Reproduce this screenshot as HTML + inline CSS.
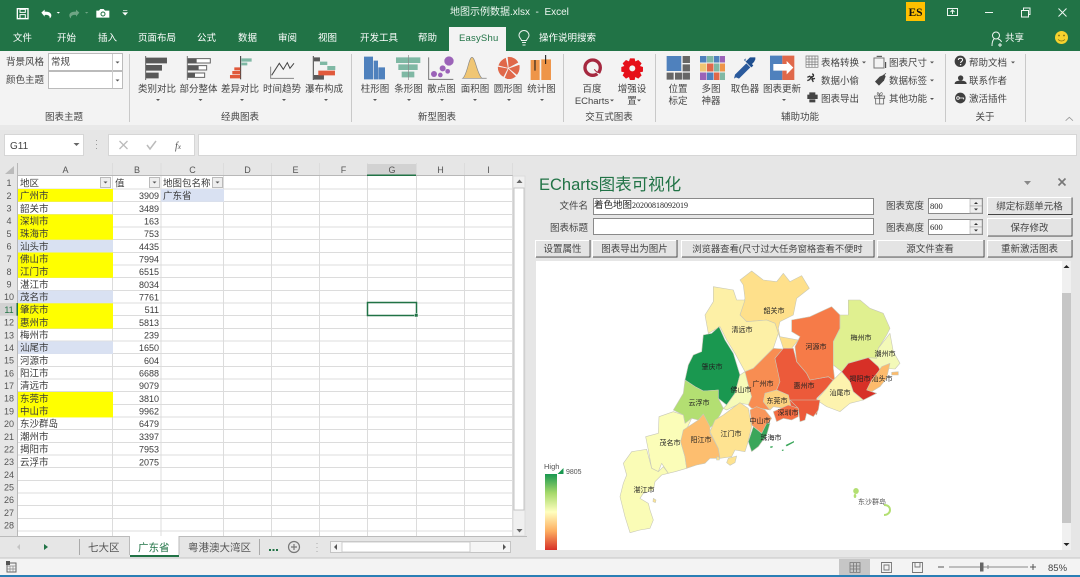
<!DOCTYPE html>
<html><head><meta charset="utf-8"><style>
html,body{margin:0;padding:0;background:#e6e6e6;overflow:hidden}
svg{display:block;filter:blur(.35px)}
text{font-family:"Liberation Sans","Noto Sans CJK SC",sans-serif;font-size:9.5px;fill:#444}
.c{text-anchor:middle}.r{text-anchor:end}
.w text,.w{fill:#f2f8f4}
.cell text{fill:#3a3a3a}
.h text{fill:#555;text-anchor:middle;font-size:9px}
.n text{font-size:9px;text-anchor:end;fill:#3a3a3a}
.m text{font-size:7px;text-anchor:middle;fill:#222}
.b{fill:#e4e4e4;stroke:none}
</style></head><body>
<svg width="1080" height="577" viewBox="0 0 1080 577" xmlns="http://www.w3.org/2000/svg">
<rect width="1080" height="577" fill="#e6e6e6"/>
<!-- title bar -->
<rect width="1080" height="51" fill="#217346"/>
<g transform="scale(.3333)" fill="none" stroke="#fff">
<path d="M52 26h32v30h-32z" stroke-width="4"/><path d="M60 28h16v9h-16zM60 44h16v11h-16z" stroke-width="3"/>
<path d="M124 38l10-9v6c12-1 20 4 20 11 0 4-2 7-5 9 1-8-5-11-15-10v5z" fill="#fff" stroke="none"/>
<path d="M170 36h10l-5 5z" fill="#fff" stroke="none"/>
<path d="M238 38l-10-9v6c-12-1-20 4-20 11 0 4 2 7 5 9-1-8 5-11 15-10v5z" fill="#6fa585" stroke="none"/>
<path d="M255 36h10l-5 5z" fill="#6fa585" stroke="none"/>
<path d="M289 32h8l4-5h10l4 5h13v21h-39z" fill="#fff" stroke="none"/><circle cx="309" cy="42" r="6" stroke="#217346" stroke-width="3"/>
<path d="M369 31h13M369 38h13l-6.500 7z" fill="#fff" stroke-width="2"/>
</g>
<g class="w"><text x="450" y="15" style="fill:#eef6f1;font-size:10px">地图示例数据.xlsx &#160;-&#160; Excel</text>
<text x="13" y="41" style="fill:#fff">文件</text><text x="57" y="41" style="fill:#fff">开始</text><text x="98" y="41" style="fill:#fff">插入</text><text x="138" y="41" style="fill:#fff">页面布局</text><text x="197" y="41" style="fill:#fff">公式</text><text x="238" y="41" style="fill:#fff">数据</text><text x="278" y="41" style="fill:#fff">审阅</text><text x="318" y="41" style="fill:#fff">视图</text><text x="360" y="41" style="fill:#fff">开发工具</text><text x="418" y="41" style="fill:#fff">帮助</text><text x="539" y="41" style="fill:#fff">操作说明搜索</text><text x="1005" y="41" style="fill:#fff">共享</text></g>
<rect x="449" y="27" width="57" height="25" fill="#f3f3f3"/>
<text x="459" y="41" style="fill:#217346;font-size:9.500px;letter-spacing:.2px">EasyShu</text>
<path d="M522 42.500h4M522.500 45h3M521.500 40.500c-.3-2-2.500-2.500-2.500-5a5 5 0 0 1 10 0c0 2.500-2.200 3-2.500 5z" fill="none" stroke="#eaf3ee" stroke-width="1"/>
<!-- ES logo -->
<rect x="906" y="2" width="19" height="19" fill="#ffc000"/>
<text x="915.500" y="16" class="c" style="font-family:'Liberation Serif',serif;font-weight:bold;font-size:11.500px;fill:#111">ES</text>
<!-- window controls -->
<g fill="none" stroke="#eef6f1" stroke-width="1">
<rect x="947.500" y="8.500" width="10" height="7"/><path d="M952.500 14v-4M950.500 12l2-2 2 2"/>
<path d="M985 12.500h8"/>
<rect x="1021.500" y="10.500" width="7" height="6.500"/><path d="M1023.500 10v-2h6.500v6.500h-1.500"/>
<path d="M1058.500 8.500l8 8M1066.500 8.500l-8 8"/>
<circle cx="996" cy="35.500" r="3.500"/><path d="M992 46c0-4 1-6 2-7M998 39c2 .5 3 1.500 3.500 3M1000 43v4M998 45h4"/>
</g>
<circle cx="1061.500" cy="37.500" r="6.500" fill="#f6d22e"/><circle cx="1059" cy="35.500" r=".9" fill="#7b6a10"/><circle cx="1064" cy="35.500" r=".9" fill="#7b6a10"/><path d="M1058 39.500q3.500 3 7 0" stroke="#7b6a10" fill="none" stroke-width=".8"/>
<!-- ribbon -->
<rect y="51" width="1080" height="74" fill="#f3f3f3"/>
<rect y="125" width="1080" height="5" fill="#e9e9e9"/>
<g fill="#c9c9c9"><rect x="129" y="54" width="1" height="68"/><rect x="351" y="54" width="1" height="68"/><rect x="563" y="54" width="1" height="68"/><rect x="655" y="54" width="1" height="68"/><rect x="945" y="54" width="1" height="68"/><rect x="1025" y="54" width="1" height="68"/></g>
<text x="6" y="65">背景风格</text><text x="6" y="83">颜色主题</text>
<rect x="48.500" y="53.500" width="74" height="17" fill="#fff" stroke="#bbb"/><rect x="48.500" y="71.500" width="74" height="17" fill="#fff" stroke="#bbb"/><path d="M112.500 54v34" stroke="#ccc"/>
<path d="M115.500 61.500h4l-2 2zM115.500 79.500h4l-2 2z" fill="#555"/>
<text x="51" y="65">常规</text>
<!-- classic icons -->
<g transform="scale(.3333)">
<path d="M437 168v72" stroke="#666" stroke-width="3"/><path d="M438 173h63v17h-63zM438 195h48v17h-48zM438 218h38v17h-38z" fill="#595959"/>
<path d="M562 168v72" stroke="#777" stroke-width="3"/>
<g fill="#fff" stroke="#666" stroke-width="3"><path d="M564 176h67v13h-67zM564 197h56v13h-56zM564 219h50v13h-50z"/></g><path d="M564 176h26v13h-26zM564 197h32v13h-32zM564 219h21v13h-21z" fill="#595959"/>
<path d="M722 168v70" stroke="#333" stroke-width="3"/><path d="M724 175h31v10h-31zM724 188h18v8h-18z" fill="#7fb8a4"/><path d="M703 202h18v9h-18zM697 213h24v10h-24zM690 225h31v10h-31z" fill="#e0593b"/>
<path d="M812 200v35h70" stroke="#888" stroke-width="3" fill="none"/><path d="M815 226l23-36 12 18 12-20 8 17 12-15" stroke="#444" stroke-width="3" fill="none"/>
<path d="M940 168v72" stroke="#444" stroke-width="3"/><path d="M942 172h18v12h-18zM942 225h30v14h-30z" fill="#595959"/><path d="M960 185h22v10h-22zM982 198h24v12h-24z" fill="#7fb8a4"/><path d="M955 212h50v14h-50z" fill="#e0593b"/>
</g>
<g class="c"><text x="157" y="92" class="c">类别对比</text><text x="198.500" y="92" class="c">部分整体</text><text x="240" y="92" class="c">差异对比</text><text x="282" y="92" class="c">时间趋势</text><text x="324" y="92" class="c">瀑布构成</text></g>
<path d="M156 99h4l-2 2zM198.500 99h4l-2 2zM240 99h4l-2 2zM282 99h4l-2 2zM324 99h4l-2 2zM373 99h4l-2 2zM407 99h4l-2 2zM440 99h4l-2 2zM473 99h4l-2 2zM507 99h4l-2 2zM540 99h4l-2 2zM782 99h4l-2 2z" fill="#555"/>
<text x="64" y="120" class="c">图表主题</text><text x="240" y="120" class="c">经典图表</text><text x="437" y="120" class="c">新型图表</text><text x="609" y="120" class="c">交互式图表</text><text x="800" y="120" class="c">辅助功能</text><text x="985" y="120" class="c">关于</text>
<!-- new chart icons -->
<g transform="translate(360,0) scale(.3333)">
<path d="M12 170h27v68h-27zM41 182h13v56h-13zM55 202h20v36h-20z" fill="#4f81bd"/>
<path d="M108 172h73v17h-73zM115 193h58v17h-58zM125 215h38v17h-38z" fill="#7fb8a4"/><path d="M146 165v75" stroke="#888" stroke-width="2"/>
<path d="M206 172v66h74" fill="none" stroke="#777" stroke-width="3"/>
<g fill="#9b63b8"><circle cx="267" cy="183" r="14"/><circle cx="248" cy="205" r="9"/><circle cx="222" cy="222" r="9"/><circle cx="263" cy="214" r="7"/><circle cx="241" cy="225" r="7"/></g>
<path d="M308 235c14-10 18-63 28-63s15 50 30 63z" fill="#f0c674" stroke="#888" stroke-width="2"/><path d="M366 235h14" stroke="#999" stroke-width="3"/>
<path d="M445 205l-3-35c18-2 30 8 34 18zM445 205l34-12c2 10 1 22-8 33zM445 205l24 24c-10 10-24 12-36 5zM445 205l-14 27c-14-6-20-22-18-33zM445 205l-31-8c3-10 12-20 24-25z" fill="#e0684a" stroke="#f3f3f3" stroke-width="2"/>
<path d="M512 180h27v60h-27zM544 178h29v62h-29z" fill="#ee9549"/><path d="M525 180v32M557 165v27" stroke="#111" stroke-width="3"/>
<circle cx="698" cy="203" r="23" fill="none" stroke="#a5283f" stroke-width="10"/><path d="M708 214l12 12" stroke="#f3f3f3" stroke-width="5"/><path d="M703 208q8 12 19 10" stroke="#a5283f" stroke-width="3" fill="none"/>
<path d="M810 175h14l2 9 9-4 10 10-5 8 9 3v14l-9 2 5 9-10 10-9-5-2 9h-14l-3-9-9 5-10-10 5-9-9-2v-14l9-3-5-8 10-10 9 4z" fill="#e60f19"/><circle cx="817" cy="205" r="9" fill="#f3f3f3"/>
<path d="M920 168h44v45h-44z" fill="#4f81bd"/><path d="M968 168h22v21h-22zM968 193h22v21h-22zM920 218h21v21h-21zM945 218h21v21h-21zM968 218h22v21h-22z" fill="#666"/>
</g>
<text x="592" y="92" class="c">百度</text><text x="592" y="104" class="c">ECharts</text><text x="632" y="92" class="c">增强设</text><text x="632" y="104" class="c">置</text>
<path d="M610 99.500h4l-2 2zM637 99.500h4l-2 2z" fill="#555"/>
<text x="375" y="92" class="c">柱形图</text><text x="408.500" y="92" class="c">条形图</text><text x="441.500" y="92" class="c">散点图</text><text x="475" y="92" class="c">面积图</text><text x="508" y="92" class="c">圆形图</text><text x="541.500" y="92" class="c">统计图</text>
<text x="678" y="92" class="c">位置</text><text x="678" y="104" class="c">标定</text><text x="711" y="92" class="c">多图</text><text x="711" y="104" class="c">神器</text><text x="745" y="92" class="c">取色器</text><text x="782" y="92" class="c">图表更新</text>
<!-- multi grid -->
<g>
<rect x="700" y="56" width="6.500" height="6.500" fill="#4f81bd"/><rect x="707" y="56" width="6.500" height="6.500" fill="#7fb8a4"/><rect x="714" y="56" width="5.500" height="6.500" fill="#4f81bd"/><rect x="720" y="56" width="5" height="6.500" fill="#9b63b8"/>
<rect x="700" y="63.500" width="6.500" height="8" fill="#f0c674"/><rect x="707" y="63.500" width="6.500" height="8" fill="#e0684a"/><rect x="714" y="63.500" width="5.500" height="8" fill="#7fb8a4"/><rect x="720" y="63.500" width="5" height="8" fill="#ee9549"/>
<rect x="700" y="72.500" width="6.500" height="7.500" fill="#9b63b8"/><rect x="707" y="72.500" width="6.500" height="7.500" fill="#4f81bd"/><rect x="714" y="72.500" width="5.500" height="7.500" fill="#e0684a"/><rect x="720" y="72.500" width="5" height="7.500" fill="#7fb8a4"/>
</g>
<!-- right ribbon icons -->
<g transform="translate(720,0) scale(.3333)">
<path d="M48 232l-6 4 3-12 34-34 12 12-34 34z" fill="#2a5a9c"/><path d="M76 186l14-14 6 0 10-0 0 6-4 8-6 6 4 5-6 5-22-22 5-5z" fill="#1f4f8f"/>
<path d="M150 167h37v73h-37z" fill="#4f81bd"/><path d="M187 167h36v73h-36z" fill="#e0684a"/>
<path d="M160 192h40v-9l20 20-20 20v-11h-40z" fill="#fff"/>
<path d="M258 168h36v34h-36zM267 168v34M276 168v34M285 168v34M258 177h36M258 186h36M258 194h36" fill="none" stroke="#777" stroke-width="2"/>
<path d="M276 222c6 0 6 8 0 8l-3 1 6 6 6-2M273 231l-4 8-7 3M275 236l5 10M262 232l9-4" stroke="#333" stroke-width="4" fill="none"/>
<path d="M262 284h6v-7h18v7h7v13h-31z M268 298h18v9h-18z" fill="#444"/>
<path d="M462 174h30v30h-30z" fill="none" stroke="#777" stroke-width="3"/><path d="M470 169h16" stroke="#444" stroke-width="3"/><path d="M497 186v18" stroke="#333" stroke-width="3"/>
<path d="M465 245l14-15 14-6 4 5-5 13-15 15z" fill="#444"/><path d="M490 226l8-6" stroke="#444" stroke-width="2"/>
<path d="M464 288h30v7h-30zM467 295h24v17h-24zM479 280v32" fill="none" stroke="#666" stroke-width="2.500"/><path d="M478 287c-8-4-8-10-3-9l4 7c1-8 8-9 8-4s-5 6-8 6" fill="none" stroke="#666" stroke-width="2"/>
<circle cx="721" cy="184" r="17" fill="#3f3f3f"/><path d="M715 180c0-7 13-7 13 0 0 4-6 4-6 9" stroke="#fff" stroke-width="3" fill="none"/><circle cx="722" cy="194" r="2" fill="#fff"/>
<circle cx="722" cy="234" r="8" fill="#3f3f3f"/><path d="M704 252c0-8 8-10 18-10s18 2 18 10z" fill="#3f3f3f"/>
<circle cx="721" cy="294" r="16" fill="#3f3f3f"/><circle cx="714" cy="294" r="4" fill="none" stroke="#fff" stroke-width="2.500"/><path d="M718 294h13v4" stroke="#fff" stroke-width="2.500" fill="none"/>
<path d="M1037 362l11-10 11 10" fill="none" stroke="#999" stroke-width="2.500"/>
</g>
<text x="821" y="66">表格转换</text><text x="821" y="84">数据小偷</text><text x="821" y="102">图表导出</text>
<text x="889" y="66">图表尺寸</text><text x="889" y="84">数据标签</text><text x="889" y="102">其他功能</text>
<text x="969" y="66">帮助文档</text><text x="969" y="84">联系作者</text><text x="969" y="102">激活插件</text>
<path d="M862 61.500h4l-2 2zM930 61.500h4l-2 2zM930 79.500h4l-2 2zM930 98h4l-2 2zM1011 61.500h4l-2 2z" fill="#555"/>
<!-- formula bar -->
<rect y="130" width="1080" height="33" fill="#e6e6e6"/>
<rect x="4.500" y="134.500" width="79" height="21" fill="#fff" stroke="#d6d6d6"/>
<text x="10" y="149" style="font-size:10px;fill:#444">G11</text><path d="M73.500 143h6l-3 3z" fill="#666"/>
<path d="M96.500 140v1M96.500 144v1M96.500 148v1" stroke="#999"/>
<rect x="108.500" y="134.500" width="86" height="21" fill="#fff" stroke="#d6d6d6"/>
<path d="M119.500 141l8 8M127.500 141l-8 8" stroke="#bbb" stroke-width="1.300"/><path d="M147 145l3 4 6-8" stroke="#bbb" fill="none" stroke-width="1.500"/>
<text x="175" y="149" style="font-family:'Liberation Serif',serif;font-style:italic;font-size:10px;fill:#555">f<tspan style="font-size:7.500px">x</tspan></text>
<rect x="198.500" y="134.500" width="878" height="21" fill="#fff" stroke="#d6d6d6"/>
<!-- grid -->
<rect x="0" y="163" width="526" height="373" fill="#e6e6e6"/>
<rect x="18" y="176" width="495" height="360" fill="#fff"/>
<g stroke="#dcdcdc" stroke-width="1" fill="none">
<path d="M18 189h495M18 201.500h495M18 214.500h495M18 227h495M18 239.500h495M18 252.500h495M18 265h495M18 277.500h495M18 290.500h495M18 303h495M18 315.500h495M18 328.500h495M18 341h495M18 353.500h495M18 366.500h495M18 379h495M18 391.500h495M18 404.500h495M18 417h495M18 429.500h495M18 442.500h495M18 455h495M18 467.500h495M18 480.500h495M18 493h495M18 505.500h495M18 518.500h495M18 531h495"/>
<path d="M112.500 163v373M161 163v373M223.500 163v373M271.500 163v373M319.500 163v373M367.500 163v373M416.500 163v373M464.500 163v373M512.500 163v373"/>
</g>
<!-- fills -->
<g fill="#ffff00"><rect x="18" y="189" width="95" height="12.700"/><rect x="18" y="214.400" width="95" height="25.400"/><rect x="18" y="252.500" width="95" height="25.300"/><rect x="18" y="303.200" width="95" height="25.400"/><rect x="18" y="392" width="95" height="25.400"/></g>
<g fill="#d9e1f2"><rect x="18" y="239.800" width="95" height="12.700"/><rect x="18" y="290.500" width="95" height="12.700"/><rect x="18" y="341.300" width="95" height="12.600"/><rect x="161" y="189" width="63" height="12.700"/></g>
<path d="M18 175.500h495M17.500 163v373" stroke="#b8b8b8" fill="none"/>
<rect x="367" y="164" width="49" height="11" fill="#d2d2d2"/><rect x="367" y="174.500" width="49" height="1.500" fill="#217346"/>
<rect x="0" y="303" width="17" height="12.700" fill="#d2d2d2"/><rect x="16.500" y="303" width="1.500" height="12.700" fill="#217346"/>
<path d="M5 174l9-8v8z" fill="#bbb"/>
<g class="h"><text x="65.500" y="173">A</text><text x="137" y="173">B</text><text x="192.500" y="173">C</text><text x="247.500" y="173">D</text><text x="295.500" y="173">E</text><text x="343.500" y="173">F</text><text x="392" y="173">G</text><text x="440.500" y="173">H</text><text x="488.500" y="173">I</text></g>
<g class="h" style="font-size:9px"><text x="9" y="186">1</text><text x="9" y="199">2</text><text x="9" y="211.500">3</text><text x="9" y="224">4</text><text x="9" y="237">5</text><text x="9" y="249.500">6</text><text x="9" y="262">7</text><text x="9" y="275">8</text><text x="9" y="287.500">9</text><text x="9" y="300">10</text><text x="9" y="313" style="fill:#217346">11</text><text x="9" y="325.500">12</text><text x="9" y="338.500">13</text><text x="9" y="351">14</text><text x="9" y="363.500">15</text><text x="9" y="376.500">16</text><text x="9" y="389">17</text><text x="9" y="401.500">18</text><text x="9" y="414.500">19</text><text x="9" y="427">20</text><text x="9" y="440">21</text><text x="9" y="452.500">22</text><text x="9" y="465">23</text><text x="9" y="478">24</text><text x="9" y="490.500">25</text><text x="9" y="503">26</text><text x="9" y="516">27</text><text x="9" y="528.500">28</text></g>
<g class="cell">
<text x="20" y="186.500">地区</text><text x="115" y="186.500">值</text><text x="163" y="186.500">地图包名称</text>
<text x="20" y="199">广州市</text><text x="20" y="212">韶关市</text><text x="20" y="224.500">深圳市</text><text x="20" y="237">珠海市</text><text x="20" y="250">汕头市</text><text x="20" y="262.500">佛山市</text><text x="20" y="275">江门市</text><text x="20" y="288">湛江市</text><text x="20" y="300.500">茂名市</text><text x="20" y="313">肇庆市</text><text x="20" y="326">惠州市</text><text x="20" y="338.500">梅州市</text><text x="20" y="351">汕尾市</text><text x="20" y="364">河源市</text><text x="20" y="376.500">阳江市</text><text x="20" y="389">清远市</text><text x="20" y="402">东莞市</text><text x="20" y="414.500">中山市</text><text x="20" y="427">东沙群岛</text><text x="20" y="440">潮州市</text><text x="20" y="452.500">揭阳市</text><text x="20" y="465.500">云浮市</text>
<text x="163" y="199">广东省</text>
</g>
<g class="n"><text x="159" y="199">3909</text><text x="159" y="212">3489</text><text x="159" y="224.500">163</text><text x="159" y="237">753</text><text x="159" y="250">4435</text><text x="159" y="262.500">7994</text><text x="159" y="275">6515</text><text x="159" y="288">8034</text><text x="159" y="300.500">7761</text><text x="159" y="313">511</text><text x="159" y="326">5813</text><text x="159" y="338.500">239</text><text x="159" y="351">1650</text><text x="159" y="364">604</text><text x="159" y="376.500">6688</text><text x="159" y="389">9079</text><text x="159" y="402">3810</text><text x="159" y="414.500">9962</text><text x="159" y="427">6479</text><text x="159" y="440">3397</text><text x="159" y="452.500">7953</text><text x="159" y="465.500">2075</text></g>
<g fill="#eee" stroke="#bbb"><rect x="100.500" y="177.500" width="10" height="10"/><rect x="149.500" y="177.500" width="10" height="10"/><rect x="212.500" y="177.500" width="10" height="10"/></g>
<path d="M103.500 181.500h4l-2 2zM152.500 181.500h4l-2 2zM215.500 181.500h4l-2 2z" fill="#555"/>
<rect x="367.500" y="302.500" width="49" height="13" fill="none" stroke="#217346" stroke-width="1.500"/><rect x="414.500" y="313.500" width="3.500" height="3.500" fill="#217346" stroke="#fff" stroke-width=".5"/>
<!-- v scroll -->
<rect x="513" y="176" width="12" height="360" fill="#f0f0f0" stroke="#dcdcdc"/>
<rect x="514" y="188" width="10" height="322" fill="#fff" stroke="#c4c4c4"/>
<path d="M516.500 183l3-3.500 3 3.500zM516.500 529l3 3.500 3-3.500z" fill="#666"/>
<!-- tabs -->
<rect y="536" width="527" height="22" fill="#e6e6e6"/>
<path d="M0 536.500h130M178 536.500h349" stroke="#bbb"/>
<path d="M20 544l-3 3 3 3z" fill="#c4c4c4"/><path d="M44 544l4 3-4 3z" fill="#217346"/>
<path d="M79.500 539v16M259.500 539v16" stroke="#aaa"/>
<rect x="130" y="536" width="49" height="20" fill="#fff"/><rect x="130" y="555" width="49" height="2" fill="#217346"/><path d="M129.500 536v19M179 536v19" stroke="#bbb"/>
<text x="88" y="551" style="font-size:10.500px;fill:#555">七大区</text><text x="138" y="551" style="font-size:10.500px;fill:#217346">广东省</text><text x="188" y="551" style="font-size:10.500px;fill:#555">粤港澳大湾区</text>
<path d="M269 549h2v2h-2zM272.500 549h2v2h-2zM276 549h2v2h-2z" fill="#217346"/>
<circle cx="294" cy="547" r="5.500" fill="none" stroke="#777" stroke-width="1.200"/><path d="M291 547h6M294 544v6" stroke="#777" stroke-width="1.200"/>
<path d="M317 543v1M317 547v1M317 551v1" stroke="#aaa"/>
<rect x="330.500" y="541.500" width="180" height="11" fill="#f5f5f5" stroke="#c4c4c4"/><rect x="342" y="542" width="128" height="10" fill="#fff" stroke="#ccc"/><path d="M337 544l-3 3 3 3zM503 544l3 3-3 3z" fill="#555"/>
<!-- task panel -->
<rect x="527" y="163" width="553" height="395" fill="#e6e6e6"/>
<text x="539" y="190" style="font-size:16.500px;fill:#217346">ECharts图表可视化</text>
<path d="M1024 181h7l-3.500 4z" fill="#888"/><path d="M1058.500 178.500l7 7M1065.500 178.500l-7 7" stroke="#777" stroke-width="1.600"/>
<g font-size="9"><text x="588" y="209" class="r">文件名</text><text x="588" y="231" class="r">图表标题</text><text x="924" y="209" class="r">图表宽度</text><text x="924" y="231" class="r">图表高度</text></g>
<g fill="#fff" stroke="#8a8a8a"><rect x="593.500" y="198.500" width="280" height="16"/><rect x="593.500" y="218.500" width="280" height="16"/><rect x="928.500" y="198.500" width="54" height="15"/><rect x="928.500" y="219.500" width="54" height="15"/></g>
<text x="594" y="208" style="font-size:9.500px;fill:#222">着色地图<tspan style="font-family:'Liberation Serif',serif;font-size:8px">20200818092019</tspan></text>
<text x="930" y="209" style="font-family:'Liberation Serif',serif;font-size:8.500px;fill:#222">800</text><text x="930" y="230" style="font-family:'Liberation Serif',serif;font-size:8.500px;fill:#222">600</text>
<g fill="#eee" stroke="#aaa" stroke-width=".6"><rect x="970" y="199" width="12" height="7"/><rect x="970" y="206" width="12" height="7"/><rect x="970" y="220" width="12" height="7"/><rect x="970" y="227" width="12" height="7"/></g>
<path d="M974 204l2-2 2 2zM974 208.500l2 2 2-2zM974 225l2-2 2 2zM974 229.500l2 2 2-2z" fill="#333"/>
<g fill="#e4e4e4" stroke="#fff">
<rect x="987.500" y="197.500" width="84" height="17"/><rect x="987.500" y="218.500" width="84" height="17"/><rect x="987.500" y="240.500" width="84" height="16"/>
<rect x="535.500" y="240.500" width="54" height="16"/><rect x="592.500" y="240.500" width="84" height="16"/><rect x="681.500" y="240.500" width="192" height="16"/><rect x="877.500" y="240.500" width="106" height="16"/>
</g>
<g stroke="#444" fill="none"><path d="M988 214.500h84v-17M988 236h84v-18M988 257h84v-17M536 257h54v-17M593 257h84v-17M682 257h192v-17M878 257h106v-17"/></g>
<text x="1029.500" y="209.500" class="c">绑定标题单元格</text><text x="1029.500" y="231" class="c">保存修改</text><text x="1029.500" y="252" class="c">重新激活图表</text>
<text x="562.500" y="252" class="c">设置属性</text><text x="634.500" y="252" class="c">图表导出为图片</text><text x="777.500" y="252" class="c" style="font-size:9.300px">浏览器查看(尺寸过大任务窗格查看不便时</text><text x="930" y="252" class="c">源文件查看</text>
<!-- map area -->
<rect x="536" y="261" width="526" height="289" fill="#fff"/>
<rect x="1062" y="261" width="9" height="289" fill="#f0f0f0"/><rect x="1062" y="293" width="9" height="230" fill="#c6c6c6"/>
<path d="M1063.500 268l3-3 3 3zM1063.500 543l3 3 3-3z" fill="#222"/>
<g transform="translate(620,265) scale(.3333)" stroke="#c8c8b8" stroke-width="1.800" stroke-linejoin="round">
<path fill="#fee08b" d="M360 45l35-27 35 27 40 5 20-25 20 25 35-18 23 38-38 30-10 50-40 20-5 20 5 25 55 10-20 25h-25l-25-75-25-10-60 5-20-20 15-50-5-40z"/>
<path fill="#fdf0a6" d="M280 65l60 10 10 30h25l-15 45 20 20 60-5 25 10 10 30-15 45-30 30-30 30-25 10-30-55-25-40-20-40-35 20-10-55 25-40z"/>
<path fill="#1a9850" d="M297 185l18 40 25 40 20 65-15 55-25 35-25-20v-25l-45 3-25-13-30-20 10-45 15-30 25-10 5-50 25-5z"/>
<path fill="#b3df72" d="M195 345l30 20 25 13 45-3v25l15 30-10 20-20 30-10 8-20-38-15 15-20-5-20 15-5-25-30-15 15-25 15-25z"/>
<path fill="#f6fab8" d="M360 330l15-10 20 50 10 35-10 15-35-5-40 20-10-5 10-10 25-35z"/>
<path fill="#f88d52" d="M375 320l25-10 30-30 30-30 30 2-25 28 10 40 5 30-10 25-35 10-5 25 20 25-30-5-25 0-10-10 10-25-10-35z"/>
<path fill="#ec5a3a" d="M490 250h30l10 40 30 35 10 20 55-10 15 10-20 25-30 30 5 30-5 20-30-25-5 20-35-5-10-20-5-30-35-15 10-25-15-70z"/>
<path fill="#f67b48" d="M515 165l55-10 65-30 25 25v40l-20 40v80l5 40-20-15-55 10-10-20-30-35-5-45 15-30-25-15z"/>
<path fill="#e0f090" d="M685 150v-45h35l30 25 40 15 20 45-10 20-25 40-5 30-25-2-60 17-20 25-25-20v-70l20-40v-40z"/>
<path fill="#f3f9b8" d="M810 205l10 55 20 35-15 17-30-2-25 0-25-32 25 2 5-30z"/>
<path fill="#fdf3ae" d="M665 320l25 30 10 30 30 25-40 10-30 25-40-15-30-20 30-35 20-25z"/>
<path fill="#d73027" d="M665 320l20-25 60-17 30 27 5 10-20 25-5 40 15 5-40 20-30-25-10-30z"/>
<path fill="#fdbb6c" d="M785 305l25-10-10 45-20 25-25 15-15-5 15-30 20-25zM815 322l20-2v10l-20 0z"/>
<path fill="#fdd27f" d="M435 385l35-10 35 15 7 30-17 10-35-5-10 10-20-25z"/>
</g>
<g transform="translate(535,400) scale(.3333)" stroke="#c8c8b8" stroke-width="1.800" stroke-linejoin="round">
<path fill="#fbfdb8" d="M332 110l38-10 2-50 43-15 30 10 5 25 20-15 -33 70 13 45 5 35-35 10-20 5-20-30-10 25-20-10-10-55z"/>
<path fill="#fafcb6" d="M290 155l45-7 15 57 20 10 15-15 15 20-20 5-20 20-5 25-30 10-10 15 25 15 5 20 10 30-10 25-30 5-30 8-15-48-15-60 10-40 10-25-10-35z"/>
<path fill="#fdbe6f" d="M437 125l8-35 45-30 15-18 20 38v20l25 45 5 30-30 0-15 15-25 5-30 10-5-35z"/>
<path fill="#fee391" d="M525 95l15-35 25-15 50-37 25 17 10 55-12 50-8 25-30-5-10 20-35 5-5-30z"/>
<path fill="#f9965b" d="M645 30l20-10 25 10 20 25-20 30-10 15-30-25z"/>
<path fill="#3aa65a" d="M655 80l25 20 15-30h10l-10 35-25 35-20 15-10-30z"/>
<path fill="#f46d43" d="M715 35l45-20 30 10v25l-20 10-25-5-20 10z"/>
<path fill="#ec5a3a" d="M765 0h90l-5 30-15 20-20-10-5 20-15 5-5-40z"/>
<path fill="#fee391" d="M580 175l25-7-5 20-15 8-10-8zM545 170l8 2 0 8-8 0zM355 295l8 5-2 8-7-3z"/>
<path fill="#3aa65a" stroke="none" d="M752 135l25-12 0 4-22 12zM705 140l8-2 0 4-6 2zM740 150l5-2 1 4-4 1z"/>
</g>
<g class="m">
<text x="774" y="313">韶关市</text><text x="742" y="332">清远市</text><text x="816" y="349">河源市</text><text x="861" y="340">梅州市</text><text x="885" y="356">潮州市</text><text x="712" y="369">肇庆市</text><text x="763" y="386">广州市</text><text x="860" y="381">揭阳市</text><text x="882" y="381">汕头市</text><text x="804" y="388">惠州市</text><text x="741" y="392">佛山市</text><text x="840" y="395">汕尾市</text><text x="777" y="403">东莞市</text><text x="699" y="405">云浮市</text><text x="788" y="415">深圳市</text><text x="760" y="423">中山市</text><text x="771" y="440">珠海市</text><text x="731" y="436">江门市</text><text x="670" y="445">茂名市</text><text x="701" y="442">阳江市</text><text x="644" y="492">湛江市</text>
<text x="872" y="504" style="fill:#555">东沙群岛</text>
</g>
<ellipse cx="856" cy="491" rx="2.800" ry="3" fill="#b3df72"/><ellipse cx="855" cy="496" rx="1.300" ry="2" fill="#b3df72"/>
<path d="M884 505c4 0 6 2 6 5s-3 5-6 5" fill="none" stroke="#b3df72" stroke-width="2"/>
<defs><linearGradient id="lg" x1="0" y1="0" x2="0" y2="1"><stop offset="0" stop-color="#1a9850"/><stop offset=".25" stop-color="#a6d96a"/><stop offset=".5" stop-color="#ffffbf"/><stop offset=".75" stop-color="#fdae61"/><stop offset="1" stop-color="#d73027"/></linearGradient></defs>
<rect x="545" y="474" width="12" height="76" fill="url(#lg)"/>
<path d="M557.500 474l6-6v6z" fill="#1a9850"/>
<text x="544" y="469" style="font-size:7.500px;fill:#555">High</text><text x="566" y="474" style="font-size:7px;fill:#555">9805</text>
<!-- status bar -->
<rect y="558" width="1080" height="17" fill="#f3f3f3"/><path d="M0 558h527M527 558h553" stroke="#c6c6c6"/>
<rect y="575" width="1080" height="2" fill="#2a7fb5"/>
<rect x="7" y="563" width="9" height="9" fill="none" stroke="#666"/><path d="M7 566h9M7 569h9M10 566v6M13 566v6" stroke="#888" stroke-width=".7"/><rect x="6" y="561" width="4" height="4" fill="#555"/>
<rect x="839" y="559" width="31" height="16" fill="#c6c6c6"/>
<path d="M850 562.500h10v10h-10zM853.500 563v9M856.500 563v9M850 566h10M850 569h10" fill="none" stroke="#777" stroke-width=".8"/>
<path d="M881.500 562.500h10v10h-10zM884 565h5v5h-5z" fill="none" stroke="#777" stroke-width=".9"/>
<path d="M912.500 562.500h10v10h-10zM915 563v4h5v-4" fill="none" stroke="#777" stroke-width=".9"/>
<path d="M938 567h6M949 567h79M1030 567h6M1033 564v6" stroke="#888"/><path d="M938 567h6M1030 567h6M1033 564v6" stroke="#555"/>
<rect x="980" y="562.500" width="3.500" height="9" fill="#666"/><path d="M988 565v4" stroke="#888"/>
<text x="1048" y="571" style="font-size:9.500px;fill:#444">85%</text>
</svg>
</body></html>
